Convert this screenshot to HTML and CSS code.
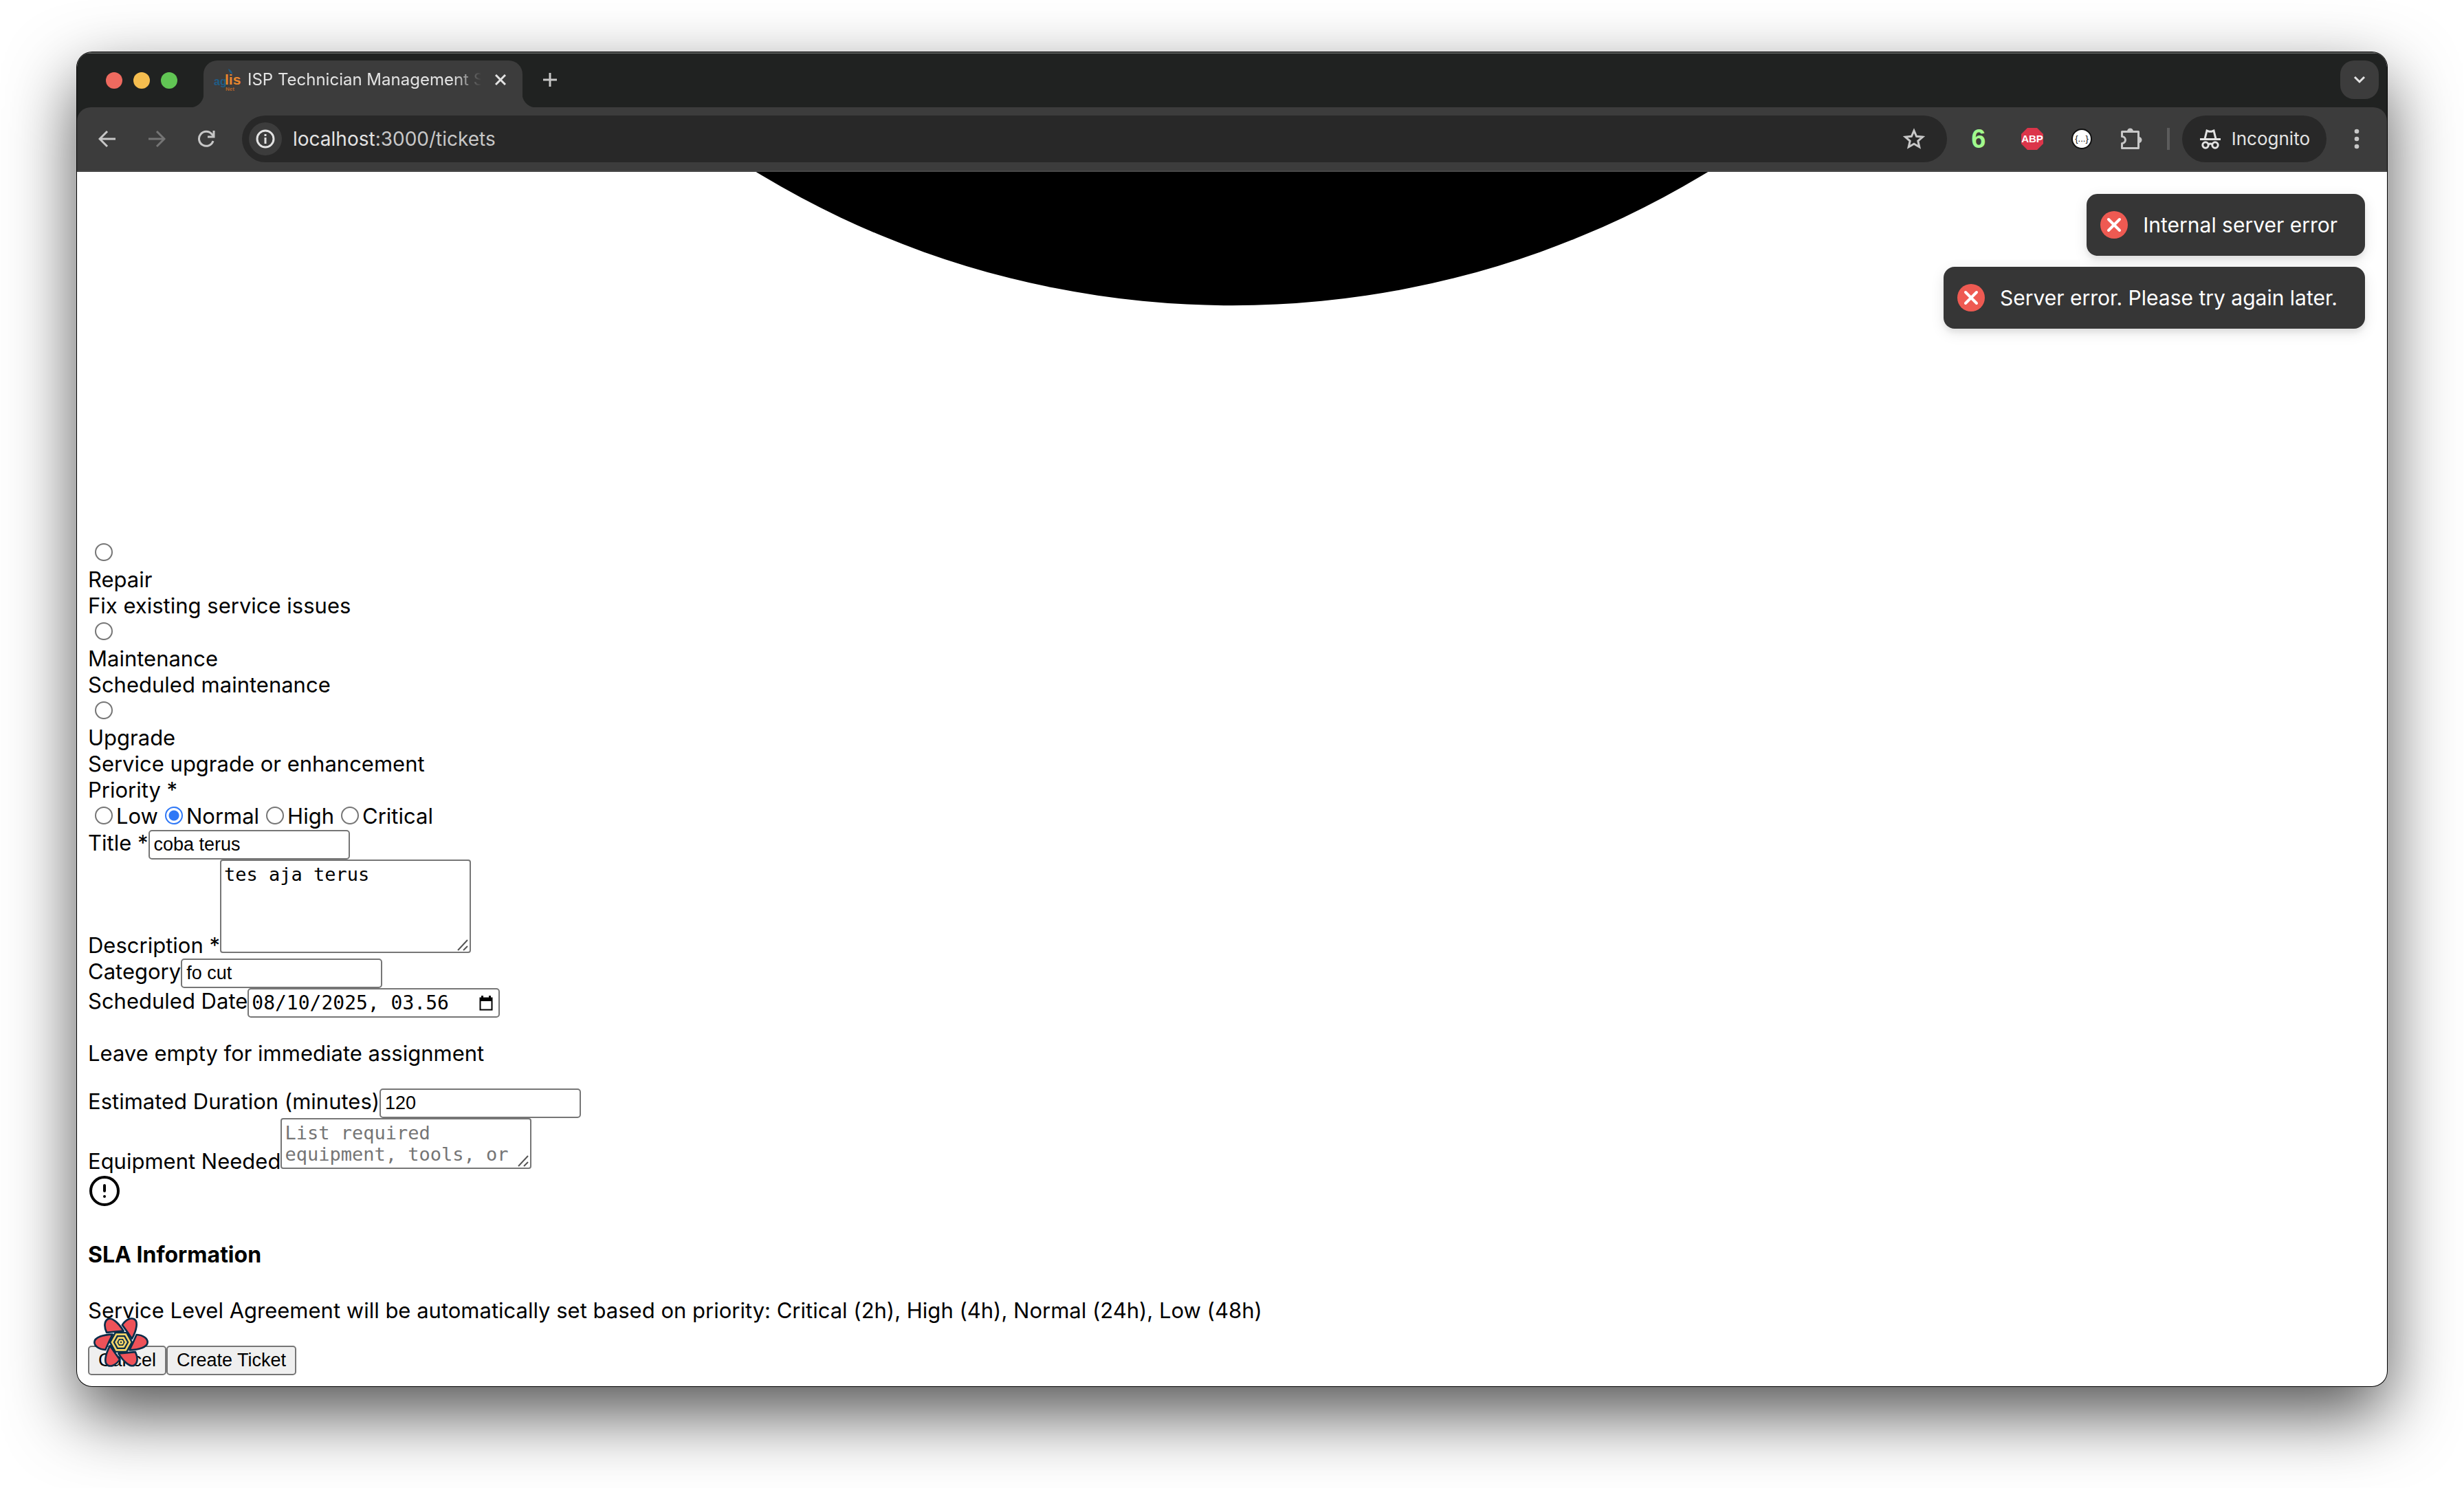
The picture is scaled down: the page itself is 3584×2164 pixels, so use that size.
FILE: index.html
```html
<!DOCTYPE html>
<html lang="en">
<head>
<meta charset="utf-8">
<title>ISP Technician Management System</title>
<link rel="stylesheet" href="styles.css">
</head>
<body>
<div class="window">
  <header class="chrome">
    <div class="tabstrip">
      <div class="lights"><span class="light red"></span><span class="light yellow"></span><span class="light green"></span></div>
      <div class="tab">
        <svg class="favicon" width="32" height="32" viewBox="0 0 32 32" aria-hidden="true">
          <path d="M20 0c4 2 6 4 6 8-3-2-5-3-6-8z" fill="#1f5c86"/>
          <text x="-1" y="24" class="fav-blue">ag</text>
          <text x="15" y="23" class="fav-orange">lis</text>
          <text x="16" y="32" class="fav-net">Net</text>
        </svg>
        <span class="tab-title">ISP Technician Management System</span>
        <button class="icon-btn tab-close" aria-label="Close tab"><svg width="16" height="16" viewBox="0 0 16 16"><path d="M1 1l14 14M15 1L1 15" stroke="#e3e3e3" stroke-width="3"/></svg></button>
      </div>
      <button class="icon-btn new-tab" aria-label="New tab"><svg width="20" height="20" viewBox="0 0 20 20"><path d="M10 0v20M0 10h20" stroke="#c7c7c7" stroke-width="3"/></svg></button>
      <button class="icon-btn tab-search" aria-label="Search tabs"><svg width="18" height="12" viewBox="0 0 18 12"><path d="M2 2l7 7 7-7" fill="none" stroke="#e3e3e3" stroke-width="3"/></svg></button>
    </div>
    <div class="toolbar">
      <button class="icon-btn nav" aria-label="Back"><svg width="26" height="26" viewBox="0 0 26 26"><path d="M25 13H3M13 2L2 13l11 11" fill="none" stroke="#c7c7c7" stroke-width="3"/></svg></button>
      <button class="icon-btn nav" aria-label="Forward"><svg width="26" height="26" viewBox="0 0 26 26"><path d="M1 13h22M13 2l11 11-11 11" fill="none" stroke="#757575" stroke-width="3"/></svg></button>
      <button class="icon-btn nav" aria-label="Reload"><svg width="26" height="26" viewBox="0 0 26 26"><path d="M23 16A10.500 10.500 0 1 1 21 6l3 3M24 1v9h-9" fill="none" stroke="#c7c7c7" stroke-width="3"/></svg></button>
      <div class="omnibox">
        <span class="site-info"><svg width="28" height="28" viewBox="0 0 28 28"><circle cx="14" cy="14" r="12" fill="none" stroke="#e3e3e3" stroke-width="3"/><path d="M14 12v9M14 7v3" stroke="#e3e3e3" stroke-width="3"/></svg></span>
        <span class="url">localhost<span class="url-path">:3000/tickets</span></span>
        <button class="icon-btn" aria-label="Bookmark"><svg width="32" height="32" viewBox="0 0 32 32"><path d="M16 4l3.600 8.300 9 .8-6.800 5.900 2 8.800L16 23.200l-7.800 4.600 2-8.800-6.800-5.900 9-.8z" fill="none" stroke="#c7c7c7" stroke-width="3"/></svg></button>
      </div>
      <div class="extensions">
        <span class="six">6</span>
        <svg width="34" height="34" viewBox="0 0 34 34"><path d="M10 1h14l9 9v14l-9 9H10l-9-9V10z" fill="#dc354a"/><text x="17" y="22" text-anchor="middle" class="abp">ABP</text></svg>
        <svg width="32" height="32" viewBox="0 0 32 32"><circle cx="16" cy="16" r="14" fill="#fff" stroke="#111" stroke-width="2"/><text x="16" y="20" text-anchor="middle" class="braces">{...}</text></svg>
        <svg width="34" height="34" viewBox="0 0 34 34"><path d="M3.500 6.500h24v24h-24v-7a5 5 0 0 0 0-10z" fill="none" stroke="#c7c7c7" stroke-width="3" stroke-linejoin="round"/><path d="M11 6a4.500 4.500 0 0 1 9 0zM28 14a4.500 4.500 0 0 1 0 9z" fill="#c7c7c7"/></svg>
      </div>
      <span class="divider"></span>
      <div class="incognito">
        <svg width="30" height="30" viewBox="0 0 30 30"><path d="M0 15.500h30M7 15l3-12 3 1.200h4L20 3l3 12" fill="none" stroke="#e3e3e3" stroke-width="3"/><circle cx="8" cy="24" r="4.200" fill="none" stroke="#e3e3e3" stroke-width="3"/><circle cx="22" cy="24" r="4.200" fill="none" stroke="#e3e3e3" stroke-width="3"/><path d="M12 23q3-2 6 0" fill="none" stroke="#e3e3e3" stroke-width="3"/></svg>
        <span>Incognito</span>
      </div>
      <button class="icon-btn menu" aria-label="Menu"><svg width="8" height="30" viewBox="0 0 8 30"><g fill="#c7c7c7"><circle cx="4" cy="4" r="3.300"/><circle cx="4" cy="15" r="3.300"/><circle cx="4" cy="26" r="3.300"/></g></svg></button>
    </div>
  </header>

  <main class="page">
    <div class="hero"><svg class="hero-icon" viewBox="0 0 20 20" aria-hidden="true"><circle cx="10" cy="10" r="8"/></svg></div>
    <form class="ticket-form">
      <div class="type-option"><div class="radio-row"><input type="radio" name="type" id="repair"></div><label for="repair">Repair</label><div>Fix existing service issues</div></div>
      <div class="type-option"><div class="radio-row"><input type="radio" name="type" id="maintenance"></div><label for="maintenance">Maintenance</label><div>Scheduled maintenance</div></div>
      <div class="type-option"><div class="radio-row"><input type="radio" name="type" id="upgrade"></div><label for="upgrade">Upgrade</label><div>Service upgrade or enhancement</div></div>
      <div>Priority *</div>
      <div class="radio-row">
        <label><input type="radio" name="priority">Low</label>
        <label><input type="radio" name="priority" checked>Normal</label>
        <label><input type="radio" name="priority">High</label>
        <label><input type="radio" name="priority">Critical</label>
      </div>
      <div class="field"><label for="title">Title *</label><input class="box" id="title" type="text" value="coba terus"></div>
      <div class="field field-area"><label for="description">Description *</label><textarea class="area" id="description" rows="4">tes aja terus</textarea></div>
      <div class="field"><label for="category">Category</label><input class="box" id="category" type="text" value="fo cut"></div>
      <div class="field"><label for="date">Scheduled Date</label><span class="box date-box"><input id="date" type="text" value="08/10/2025, 03.56"><svg width="20" height="24" viewBox="0 0 20 24" aria-hidden="true"><path d="M1.500 4.500h17v17h-17z" fill="none" stroke="#000" stroke-width="2"/><path d="M1 4h18v5H1zM3 1h3v4H3zM14 1h3v4h-3z"/></svg></span></div>
      <p>Leave empty for immediate assignment</p>
      <div class="field"><label for="duration">Estimated Duration (minutes)</label><input class="box" id="duration" type="number" value="120"></div>
      <div class="field field-area"><label for="equipment">Equipment Needed</label><textarea class="area" id="equipment" rows="2" placeholder="List required equipment, tools, or materials"></textarea></div>
      <div class="notice-icon"><svg width="48" height="48" viewBox="0 0 24 24" fill="none" stroke="#000" stroke-width="2" stroke-linecap="round"><circle cx="12" cy="12" r="10"/><path d="M12 8v4M12 16h.01"/></svg></div>
      <h4>SLA Information</h4>
      <p>Service Level Agreement will be automatically set based on priority: Critical (2h), High (4h), Normal (24h), Low (48h)</p>
      <div class="actions"><button type="button">Cancel</button><button type="submit">Create Ticket</button></div>
    </form>

    <div class="toasts">
      <div class="toast" role="status"><svg width="40" height="40" viewBox="0 0 40 40"><circle cx="20" cy="20" r="20" fill="#ee5a52"/><path d="M12 12l16 16M28 12L12 28" stroke="#fff" stroke-width="4" stroke-linecap="round"/></svg><span>Internal server error</span></div>
      <div class="toast" role="status"><svg width="40" height="40" viewBox="0 0 40 40"><circle cx="20" cy="20" r="20" fill="#ee5a52"/><path d="M12 12l16 16M28 12L12 28" stroke="#fff" stroke-width="4" stroke-linecap="round"/></svg><span>Server error. Please try again later.</span></div>
    </div>
    <button class="devtools" aria-label="Open query devtools">
      <svg width="80" height="72" viewBox="-120 -108 240 216">
        <defs><path id="petal" d="M68-33C98-31 116-16 116 0C116 21 78 33 37 34C48 12 58-10 68-33Z"/></defs>
        <g fill="#ee5259" stroke="#0b2d49" stroke-width="8" stroke-linejoin="round">
          <use href="#petal"/><use href="#petal" transform="rotate(60)"/><use href="#petal" transform="rotate(120)"/><use href="#petal" transform="rotate(180)"/><use href="#petal" transform="rotate(240)"/><use href="#petal" transform="rotate(300)"/>
        </g>
        <path d="M-52 0L-27-45H27L52 0 27 45H-27Z" fill="#0b2d49"/>
        <g fill="none" stroke="#f6d568" stroke-width="8"><path d="M-39 0L-20-34H20L39 0 20 34H-20Z"/><path d="M-22 0L-11-19H11L22 0 11 19H-11Z"/><circle r="7" stroke-width="7"/></g>
      </svg>
    </button>
  </main>
</div>
</body>
</html>
```
FILE: styles.css
```css
* { box-sizing: border-box; }

body {
  margin: 0;
  min-height: 100vh;
  padding: 76px 112px 148px;
  background: #fff;
  color: #000;
  font-family: Inter, "Liberation Sans", sans-serif;
  font-size: 31px;
  line-height: 38px;
}

button { font: inherit; color: inherit; }

.window {
  display: flex;
  flex-direction: column;
  height: calc(100vh - 224px);
  border-radius: 22px;
  overflow: hidden;
  background: #fff;
  box-shadow: 0 0 0 1px #000, 0 40px 100px rgba(0, 0, 0, 0.68);
}

/* Browser chrome */
.chrome {
  flex: none;
  background: #202221;
  box-shadow: inset 0 2px 0 #5c5e5d;
}

.icon-btn {
  display: flex;
  align-items: center;
  justify-content: center;
  flex: none;
  padding: 0;
  border: 0;
  background: none;
}

.tabstrip {
  display: flex;
  height: 80px;
  padding: 12px 12px 0 42px;
}

.lights { display: flex; gap: 16px; padding-top: 17px; width: 142px; }
.light { width: 24px; height: 24px; border-radius: 50%; }
.red { background: #ee6a5f; }
.yellow { background: #f5bd4f; }
.green { background: #61c554; }

.tab {
  position: relative;
  display: flex;
  align-items: center;
  width: 464px;
  height: 68px;
  padding: 0 20px 12px 16px;
  border-radius: 20px 20px 0 0;
  background: #3c3c3c;
}
.tab::before,
.tab::after {
  content: "";
  position: absolute;
  bottom: 0;
  width: 20px;
  height: 20px;
}
.tab::before { left: -20px; background: radial-gradient(circle at 0 0, transparent 20px, #3c3c3c 21px); }
.tab::after { right: -20px; background: radial-gradient(circle at 100% 0, transparent 20px, #3c3c3c 21px); }

.favicon { flex: none; overflow: visible; }
.fav-blue { font: bold 16px "Liberation Sans", sans-serif; fill: #1f5c86; }
.fav-orange { font: bold 21px "Liberation Sans", sans-serif; fill: #e8862e; }
.fav-net { font: bold 8px "Liberation Sans", sans-serif; fill: #b5652a; }

.tab-title {
  flex: 1;
  margin: 0 16px;
  overflow: hidden;
  white-space: nowrap;
  color: #e3e3e3;
  font-size: 24px;
  line-height: 32px;
  -webkit-mask-image: linear-gradient(to right, #000 88%, transparent);
  mask-image: linear-gradient(to right, #000 88%, transparent);
}
.tab-close { width: 24px; height: 24px; }
.new-tab { width: 56px; height: 56px; margin-left: 12px; }
.tab-search {
  width: 56px;
  height: 56px;
  margin-left: auto;
  border-radius: 20px;
  background: #3c3c3c;
}

.toolbar {
  display: flex;
  align-items: center;
  height: 94px;
  padding: 10px 24px 10px 20px;
  border-radius: 20px 20px 0 0;
  border-bottom: 2px solid #474747;
  background: #3c3c3c;
}
.nav { width: 48px; height: 48px; margin-right: 24px; }

.omnibox {
  display: flex;
  flex: 1;
  align-items: center;
  height: 68px;
  padding: 0 32px 0 10px;
  border-radius: 34px;
  background: #282828;
}
.nav + .omnibox { margin-left: 4px; }
.site-info {
  display: flex;
  align-items: center;
  justify-content: center;
  width: 48px;
  height: 48px;
  border-radius: 50%;
  background: #3c3c3c;
}
.url { flex: 1; margin-left: 16px; color: #e3e3e3; font-size: 28px; }
.url-path { color: #c7c7c7; }

.extensions { display: flex; align-items: center; gap: 39px; margin-left: 24px; }
.six { width: 44px; color: #a1f98d; font: bold 38px/40px "Liberation Sans", sans-serif; text-align: center; }
.abp { font: bold 15px "Liberation Sans", sans-serif; fill: #fff; }
.braces { font: 13px "Liberation Sans", sans-serif; fill: #111; }
.divider { width: 4px; height: 32px; margin: 0 18px 0 35px; background: #5c5c5c; }
.incognito {
  display: flex;
  align-items: center;
  gap: 16px;
  height: 68px;
  padding: 0 24px 0 26px;
  border-radius: 34px;
  background: #282828;
  color: #e3e3e3;
  font-size: 26px;
}
.menu { width: 40px; height: 48px; margin-left: 24px; }

/* Page */
.page {
  position: relative;
  display: flex;
  flex: 1;
  flex-direction: column;
  min-height: 0;
  padding: 0 16px 16px;
}

.hero {
  display: flex;
  flex: 1;
  flex-direction: column;
  justify-content: flex-end;
  min-height: 0;
  padding-bottom: 8px;
  overflow: hidden;
}
.hero-icon { flex: none; width: 100%; }

.ticket-form { flex: none; }
.type-option label { display: block; }
.radio-row { display: flex; height: 39px; }
.radio-row label { display: flex; }

input[type="radio"] {
  appearance: none;
  width: 26px;
  height: 26px;
  margin: 5px 5px 0 10px;
  border: 2px solid #767676;
  border-radius: 50%;
  background: #fff;
}
input[type="radio"]:checked {
  border-color: #2f78f6;
  background: radial-gradient(circle, #2f78f6 7px, #fff 8px);
}

.field { display: flex; align-items: flex-start; }
.field-area { align-items: flex-end; }

.box {
  width: 293px;
  height: 43px;
  padding: 2px 6px;
  border: 2px solid #767676;
  border-radius: 5px;
  background: #fff;
  color: #000;
  font: 27px "Liberation Sans", sans-serif;
}
input[type="number"] { appearance: textfield; }

.date-box {
  display: flex;
  align-items: center;
  justify-content: space-between;
  width: 367px;
  padding: 0 8px 0 4px;
}
.date-box input {
  width: 300px;
  padding: 0;
  border: 0;
  background: none;
  font: 28px/36px "DejaVu Sans Mono", monospace;
}

.area {
  display: block;
  width: 365px;
  margin: 0 0 8px;
  padding: 4px;
  border: 2px solid #767676;
  border-radius: 4px;
  overflow: hidden;
  resize: none;
  background: #fff url("data:image/svg+xml,%3Csvg xmlns='http://www.w3.org/2000/svg' width='18' height='18'%3E%3Cpath d='M1 16L15 1M9 16l6-6' stroke='%23555' stroke-width='2'/%3E%3C/svg%3E") no-repeat right bottom;
  color: #000;
  font: 27px/31px "DejaVu Sans Mono", monospace;
}
.area::placeholder { color: #757575; opacity: 1; }

p { margin: 32px 0; line-height: 39px; }
h4 { margin: 42px 0; font-size: 32px; }
.notice-icon { height: 56px; }
.notice-icon svg { display: block; }

.actions { display: flex; }
.actions button {
  height: 43px;
  padding: 0 13px;
  border: 2px solid #767676;
  border-radius: 5px;
  background: #efefef;
  font: 27px "Liberation Sans", sans-serif;
}

.toasts {
  position: absolute;
  top: 32px;
  right: 32px;
  display: flex;
  flex-direction: column;
  align-items: flex-end;
  gap: 16px;
}
.toast {
  display: flex;
  align-items: center;
  gap: 22px;
  height: 90px;
  padding: 0 40px 0 20px;
  border-radius: 16px;
  background: #363636;
  color: #fff;
  font-size: 30px;
  box-shadow: 0 6px 20px rgba(0, 0, 0, 0.1), 0 6px 6px rgba(0, 0, 0, 0.05);
}

.devtools {
  position: absolute;
  left: 24px;
  bottom: 28px;
  padding: 0;
  border: 0;
  background: none;
}
.devtools svg { display: block; }
```
